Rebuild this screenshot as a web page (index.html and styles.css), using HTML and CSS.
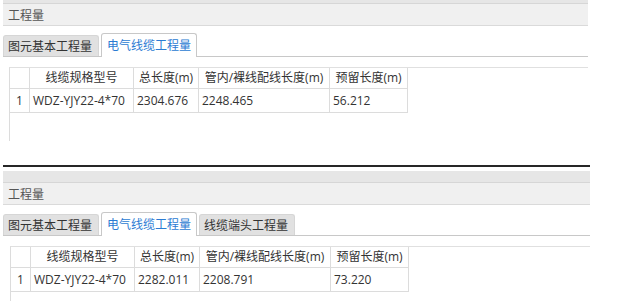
FILE: index.html
```html
<!DOCTYPE html>
<html lang="zh">
<head>
<meta charset="utf-8">
<title>工程量</title>
<link rel="stylesheet" href="styles.css">
</head>
<body>
<section class="panel panel--first">
  <div class="band band--short"></div>
  <div class="title">工程量</div>
  <div class="tabs">
    <div class="tab">图元基本工程量</div>
    <div class="tab tab--active">电气线缆工程量</div>
  </div>
  <div class="grid">
    <table>
      <colgroup>
        <col class="c0"><col class="c1"><col class="c2"><col class="c3"><col class="c4">
      </colgroup>
      <tr class="head"><th></th><th>线缆规格型号</th><th>总长度(m)</th><th>管内/裸线配线长度(m)</th><th>预留长度(m)</th></tr>
      <tr class="row"><td class="idx">1</td><td>WDZ-YJY22-4*70</td><td>2304.676</td><td>2248.465</td><td>56.212</td></tr>
    </table>
  </div>
</section>
<div class="separator"></div>
<section class="panel panel--second">
  <div class="band band--tall"></div>
  <div class="title">工程量</div>
  <div class="tabs">
    <div class="tab">图元基本工程量</div>
    <div class="tab tab--active">电气线缆工程量</div>
    <div class="tab">线缆端头工程量</div>
  </div>
  <div class="grid">
    <table>
      <colgroup>
        <col class="c0"><col class="c1"><col class="c2"><col class="c3"><col class="c4">
      </colgroup>
      <tr class="head"><th></th><th>线缆规格型号</th><th>总长度(m)</th><th>管内/裸线配线长度(m)</th><th>预留长度(m)</th></tr>
      <tr class="row"><td class="idx">1</td><td>WDZ-YJY22-4*70</td><td>2282.011</td><td>2208.791</td><td>73.220</td></tr>
    </table>
  </div>
</section>
</body>
</html>
```
FILE: styles.css
```css
html, body {
  margin: 0;
  padding: 0;
  background: #ffffff;
  overflow: hidden;
}
body {
  font-family: "Open Sans", "Noto Sans CJK SC", sans-serif;
  font-size: 12px;
  color: #333333;
}
.panel {
  margin-left: 3px;
}
.panel--first {
  width: 585px;
}
.panel--second {
  width: 587px;
  margin-top: 4px;
}
.band {
  background: #e6e6e6;
  border-bottom: 1px solid #d6d6d6;
}
.band--short {
  height: 3px;
}
.band--tall {
  height: 11px;
}
.title {
  height: 21px;
  line-height: 21px;
  background: #f0f0f0;
  border-bottom: 1px solid #dadada;
  padding-left: 5px;
  color: #555555;
  font-family: "Noto Sans CJK SC", sans-serif;
}
.tabs {
  display: flex;
  align-items: flex-end;
  gap: 2px;
  height: 23px;
  padding-top: 7px;
  border-bottom: 1px solid #c8c8c8;
}
.tab {
  box-sizing: border-box;
  height: 21px;
  line-height: 19px;
  padding: 0 6px 0 4px;
  background: #e1e1e1;
  border: 1px solid #d6d6d6;
  border-bottom: none;
  border-radius: 3px 3px 0 0;
  color: #333333;
  font-family: "Noto Sans CJK SC", sans-serif;
  white-space: nowrap;
}
.tab--active {
  height: 24px;
  line-height: 22px;
  margin-bottom: -1px;
  padding: 0 5px;
  background: #ffffff;
  border-color: #c8c8c8;
  color: #2b7bd3;
}
.grid {
  margin-top: 10px;
  margin-left: 6px;
  height: 73px;
  border-top: 1px solid #e0e0e0;
  border-left: 1px solid #dcdcdc;
}
.panel--second .grid {
  margin-left: 7px;
  height: 54px;
}
table {
  border-collapse: separate;
  border-spacing: 0;
  table-layout: fixed;
  width: 398px;
}
.c0 { width: 20px; }
.c1 { width: 104px; }
.c2 { width: 65px; }
.c3 { width: 131px; }
.c4 { width: 78px; }
th, td {
  box-sizing: border-box;
  border-right: 1px solid #dcdcdc;
  border-bottom: 1px solid #dcdcdc;
  padding: 0 0 0 3px;
  white-space: nowrap;
  overflow: hidden;
  font-weight: normal;
  color: #333333;
}
th {
  height: 21px;
  padding: 0;
  text-align: center;
  line-height: 20px;
}
td {
  height: 24px;
  line-height: 23px;
  text-align: left;
}
td.idx {
  padding: 0;
  text-align: center;
}
.separator {
  margin: 24px 0 0 3px;
  width: 587px;
  height: 2px;
  background: #262626;
}
```
